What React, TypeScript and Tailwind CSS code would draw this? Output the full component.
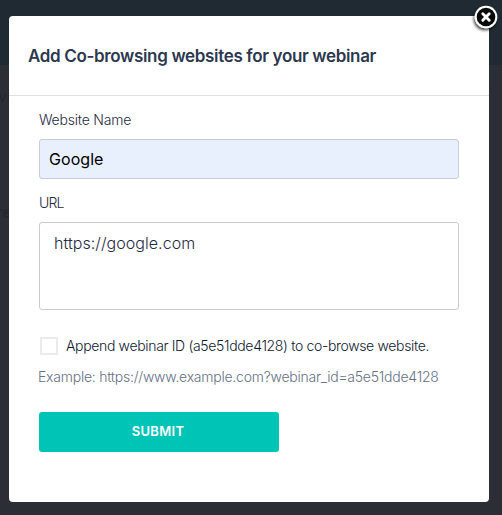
import { useState } from "react";

const WEBINAR_ID = "a5e51dde4128";

const CloseIcon = () => (
  <svg width="34" height="34" viewBox="0 0 34 34" fill="none">
    <defs>
      <filter id="closeShadow" x="-30%" y="-30%" width="160%" height="160%">
        <feDropShadow dx="-1" dy="2" stdDeviation="1.8" floodOpacity="0.75" />
      </filter>
    </defs>
    <circle cx="17" cy="17" r="11.3" fill="#fff" filter="url(#closeShadow)" />
    <circle cx="17" cy="17" r="9.3" fill="#0a0a0a" />
    <path
      d="M13.8 13.8l6.4 6.4M20.2 13.8l-6.4 6.4"
      stroke="#fff"
      strokeWidth="2.9"
      strokeLinecap="round"
    />
  </svg>
);

const PageBackdrop = () => (
  <div className="absolute inset-0 flex flex-col bg-[#2c2e36] text-base leading-6 text-[#25272e]">
    <div className="h-[65px] bg-[#1f2a33]" />
    <p className="-ml-0.5 mt-[19px]">vi</p>
    <p className="-ml-1 mt-[92px] font-bold">re</p>
  </div>
);

const CobrowseForm = () => {
  const [name, setName] = useState("Google");
  const [url, setUrl] = useState("https://google.com");
  const [appendId, setAppendId] = useState(false);

  return (
    <form className="flex flex-col px-[30px] pt-3.5">
      <label
        htmlFor="name"
        className="text-sm font-light leading-5 tracking-[-0.2px] text-[#1f2c44]"
      >
        Website Name
      </label>
      <input
        id="name"
        className="mt-[9px] h-10 rounded-[3px] border border-[#c9cdd2] bg-[#e8f0fe] px-[9px] text-base tracking-[0.05px] text-black outline-none"
        value={name}
        onChange={(e) => setName(e.target.value)}
      />
      <label
        htmlFor="url"
        className="mt-3.5 text-sm font-light leading-5 tracking-[-0.8px] text-[#1f2c44]"
      >
        URL
      </label>
      <textarea
        id="url"
        className="mt-[9px] h-[88px] resize-none rounded-[3px] border border-[#c9cbcd] px-3.5 py-2 text-base font-light leading-6 tracking-[0.05px] text-[#1f2c44] outline-none"
        value={url}
        onChange={(e) => setUrl(e.target.value)}
      />
      <label className="mt-[26px] flex items-center text-sm font-light leading-5 tracking-[-0.34px] text-[#0f1a2e]">
        <input
          type="checkbox"
          className="ml-px mr-2 size-[18px] appearance-none border-2 border-[#ebebeb] bg-white"
          checked={appendId}
          onChange={(e) => setAppendId(e.target.checked)}
        />
        <span className="whitespace-nowrap">
          Append webinar ID ({WEBINAR_ID}) to co-browse website.
        </span>
      </label>
      <p className="-ml-px mt-[11px] whitespace-nowrap text-sm font-light leading-5 tracking-[-0.24px] text-[#657186]">
        Example: https://www.example.com?webinar_id={WEBINAR_ID}
      </p>
      <button
        type="button"
        className="mt-[25px] h-10 w-60 rounded-[3px] bg-[#00c4b6] pr-0.5 text-[13px] font-semibold tracking-[0.3px] text-white"
      >
        SUBMIT
      </button>
    </form>
  );
};

export default function App() {
  return (
    <div className="relative h-[515px] w-[502px] overflow-hidden font-['Inter',sans-serif]">
      <PageBackdrop />
      <div className="relative ml-[9px] mt-4 h-[486px] w-[480px] rounded-[4px] bg-white">
        <header className="flex h-20 items-center border-b border-[#dfe0e1] px-[19px] pt-0.5">
          <h1 className="whitespace-nowrap text-[17px] font-semibold tracking-[-0.34px] text-[#2c3850]">
            Add Co-browsing websites for your webinar
          </h1>
        </header>
        <CobrowseForm />
        <button
          type="button"
          aria-label="Close"
          className="absolute -right-[14px] -top-4"
        >
          <CloseIcon />
        </button>
      </div>
    </div>
  );
}
